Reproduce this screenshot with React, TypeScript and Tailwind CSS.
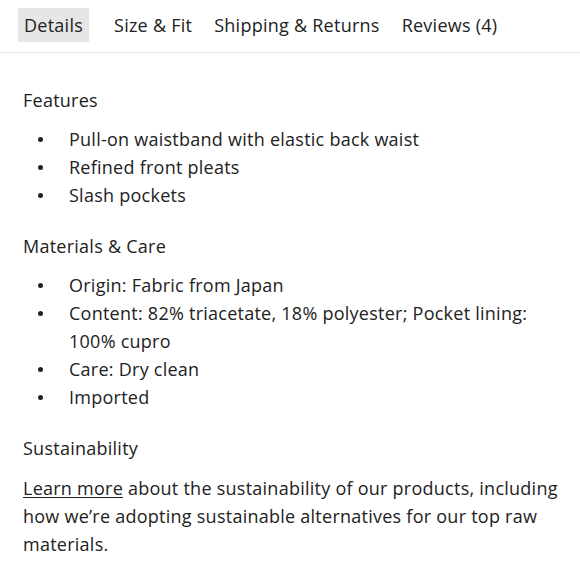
import React from 'react';

const tabs = ['Details', 'Size & Fit', 'Shipping & Returns', 'Reviews (4)'];

function Bullets({ items }: { items: string[] }) {
  return (
    <ul className="mt-[11px] flex flex-col">
      {items.map((it) => (
        <li key={it} className="flex leading-[28px]">
          <span className="w-[46px] shrink-0 h-[28px] flex items-center pl-[15px]">
            <span className="w-[5px] h-[5px] rounded-full bg-[#222]" />
          </span>
          <span>{it}</span>
        </li>
      ))}
    </ul>
  );
}

export default function App() {
  return (
    <div className="w-[580px] h-[580px] bg-white text-[#222] text-[18px] tracking-[0.25px] overflow-hidden" style={{ fontFamily: '"Open Sans", sans-serif' }}>
      <div className="flex items-center gap-[10px] px-[18px] pt-[8px] pb-[10px] border-b border-[#e3e3e3]">
        {tabs.map((t, i) => (
          <div key={t} className={`px-[6px] h-[34px] flex items-center ${i === 0 ? 'bg-[#e6e6e6] mr-[9px]' : ''}`}>
            {t}
          </div>
        ))}
      </div>
      <div className="pl-[23px] pt-[33px] pr-[10px] flex flex-col gap-[23px]">
        <div>
          <h3 className="leading-[28px]">Features</h3>
          <Bullets items={['Pull-on waistband with elastic back waist', 'Refined front pleats', 'Slash pockets']} />
        </div>
        <div>
          <h3 className="leading-[28px]">Materials &amp; Care</h3>
          <Bullets
            items={[
              'Origin: Fabric from Japan',
              'Content: 82% triacetate, 18% polyester; Pocket lining: 100% cupro',
              'Care: Dry clean',
              'Imported',
            ]}
          />
        </div>
        <div>
          <h3 className="leading-[28px]">Sustainability</h3>
          <p className="mt-[12px] leading-[28px]">
            <a className="underline underline-offset-2">Learn more</a> about the sustainability of our products, including how we’re adopting sustainable alternatives for our top raw materials.
          </p>
        </div>
      </div>
    </div>
  );
}
